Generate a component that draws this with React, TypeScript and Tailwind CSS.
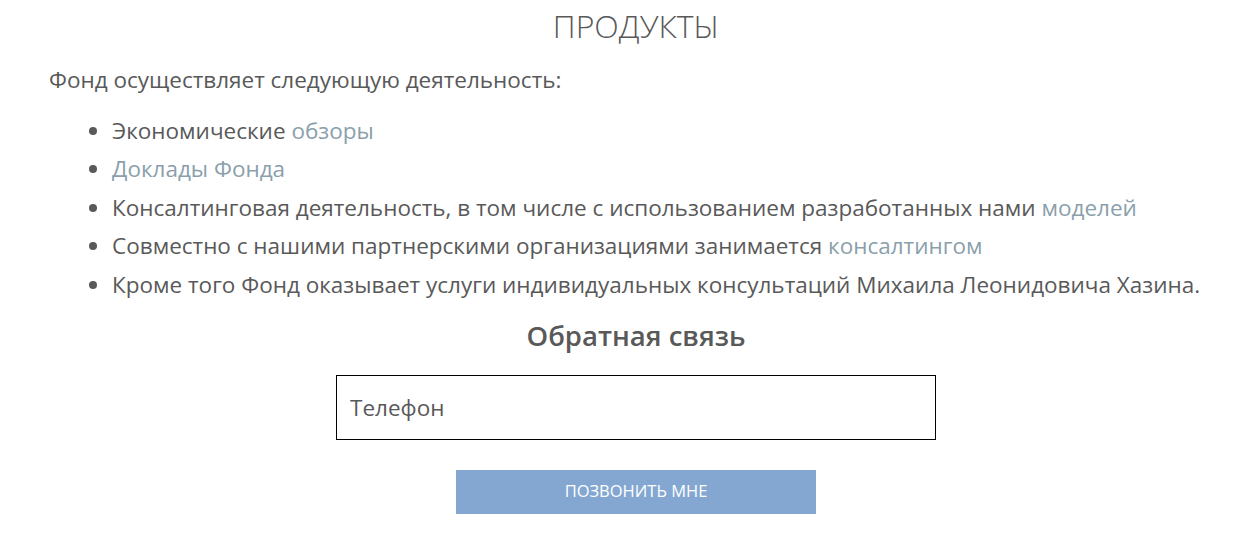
export default function App() {
  const link = "text-[#8a9fab]";
  const items: { text: string; link?: string }[] = [
    { text: "Экономические ", link: "обзоры" },
    { text: "", link: "Доклады Фонда" },
    { text: "Консалтинговая деятельность, в том числе с использованием разработанных нами ", link: "моделей" },
    { text: "Совместно с нашими партнерскими организациями занимается ", link: "консалтингом" },
    { text: "Кроме того Фонд оказывает услуги индивидуальных консультаций Михаила Леонидовича Хазина." },
  ];
  return (
    <div className="min-h-screen bg-white font-['Open_Sans',sans-serif] text-[#595959]">
      <div className="ml-[49px] w-[1174px] flex flex-col">
        <h1 className="mt-[2px] text-center text-[32px] font-light leading-normal text-[#595959]">ПРОДУКТЫ</h1>
        <p className="mt-[13px] text-[22.5px] leading-normal">
          Фонд осуществляет следующую деятельность:
        </p>
        <ul className="mt-[15px] list-disc pl-[63px] text-[22.5px] leading-[38.5px]">
          {items.map((it, i) => (
            <li key={i} className="marker:text-[#595959]">
              {it.text}
              {it.link && <a className={link}>{it.link}</a>}
            </li>
          ))}
        </ul>
        <h2 className="mt-[11px] text-center text-[27.5px] font-semibold leading-normal text-[#595959]">
          Обратная связь
        </h2>
        <div className="mt-[18px] flex justify-center">
          <input
            placeholder="Телефон"
            className="h-[65px] w-[600px] border border-black px-[13px] text-[22.5px] text-[#595959] placeholder:text-[#595959] outline-none"
          />
        </div>
        <div className="mt-[30px] flex justify-center">
          <button className="h-[44px] w-[360px] bg-[#83a7d1] text-[16.5px] uppercase text-white">
            Позвонить мне
          </button>
        </div>
      </div>
    </div>
  );
}
